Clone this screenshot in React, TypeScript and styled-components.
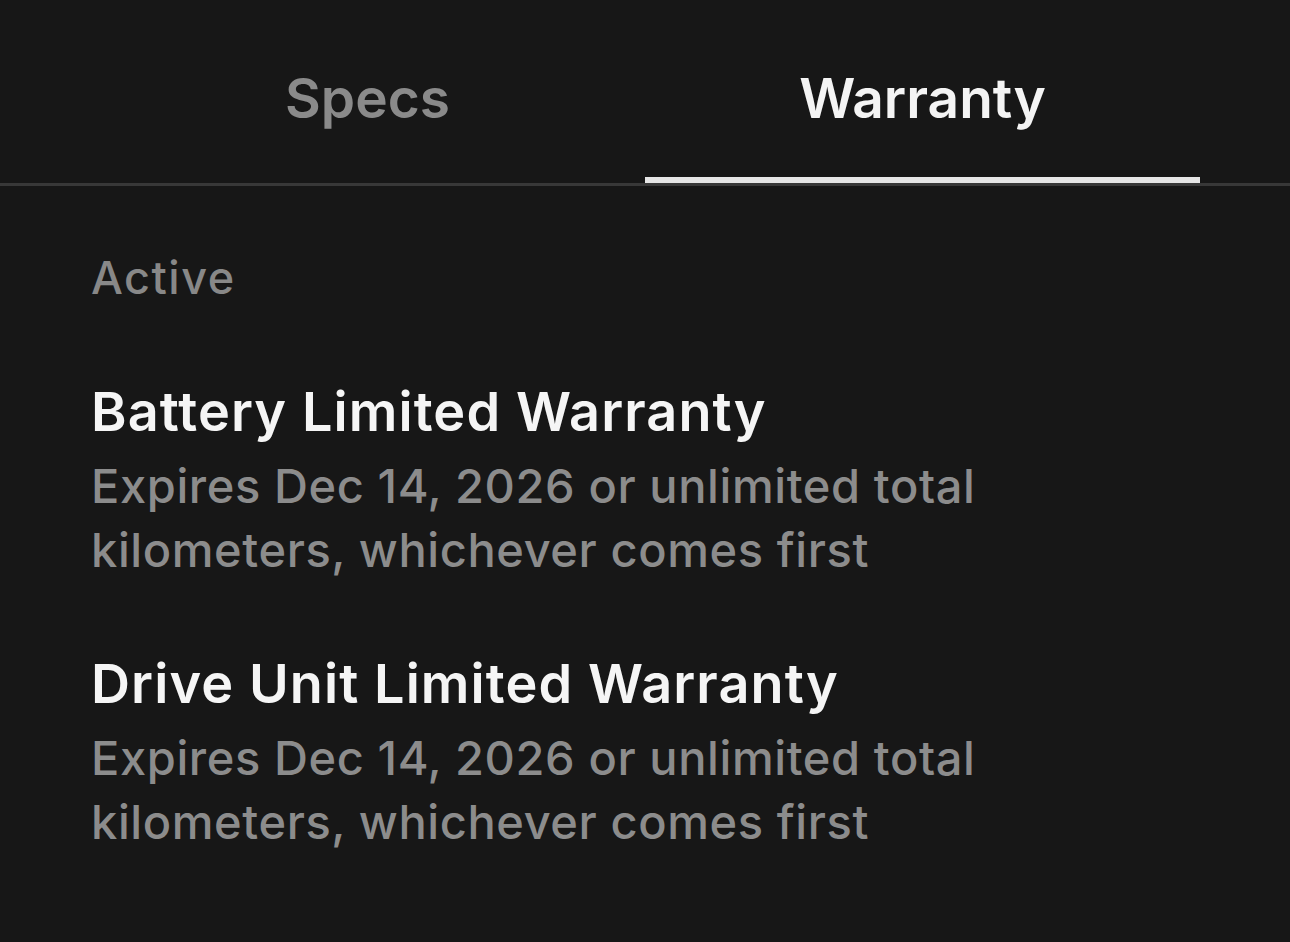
import React from "react";
import styled, { createGlobalStyle } from "styled-components";

const Global = createGlobalStyle`
  html, body { margin: 0; padding: 0; background: #171717; }
  body { font-family: Inter, "Noto Sans", "Liberation Sans", sans-serif; -webkit-font-smoothing: antialiased; }
`;

const Page = styled.div`
  width: 1290px;
  height: 942px;
  background: #171717;
  overflow: hidden;
`;

const TabBar = styled.div`
  display: grid;
  grid-template-columns: 1fr 1fr;
  padding: 0 90px;
  border-bottom: 3px solid #383838;
`;

const Tab = styled.div<{ $active?: boolean }>`
  padding: 66px 0 47px;
  text-align: center;
  font-size: 55px;
  line-height: 64px;
  font-weight: 600;
  color: ${(p) => (p.$active ? "#f4f4f4" : "#8a8a8a")};
  border-bottom: 6px solid ${(p) => (p.$active ? "#e6e6e6" : "transparent")};
`;

const Content = styled.div`
  padding: 64px 90px 0 91px;
  display: flex;
  flex-direction: column;
`;

const SectionLabel = styled.div`
  font-size: 45px;
  line-height: 56px;
  font-weight: 500;
  letter-spacing: 1.5px;
  color: #888888;
  margin-bottom: 74px;
`;

const List = styled.div`
  display: flex;
  flex-direction: column;
  gap: 70px;
`;

const Item = styled.div`
  display: flex;
  flex-direction: column;
  gap: 10px;
`;

const Title = styled.div`
  font-size: 54px;
  line-height: 64px;
  font-weight: 600;
  letter-spacing: 1.1px;
  color: #f5f5f5;
`;

const Sub = styled.div`
  font-size: 47px;
  line-height: 64px;
  font-weight: 500;
  letter-spacing: 0.6px;
  color: #8c8c8c;
  max-width: 950px;
`;

const items = [
  "Battery Limited Warranty",
  "Drive Unit Limited Warranty",
];

export default function App() {
  return (
    <Page>
      <Global />
      <TabBar>
        <Tab>Specs</Tab>
        <Tab $active>Warranty</Tab>
      </TabBar>
      <Content>
        <SectionLabel>Active</SectionLabel>
        <List>
          {items.map((t) => (
            <Item key={t}>
              <Title>{t}</Title>
              <Sub>
                Expires Dec 14, 2026 or unlimited total
                <br />
                kilometers, whichever comes first
              </Sub>
            </Item>
          ))}
        </List>
      </Content>
    </Page>
  );
}
